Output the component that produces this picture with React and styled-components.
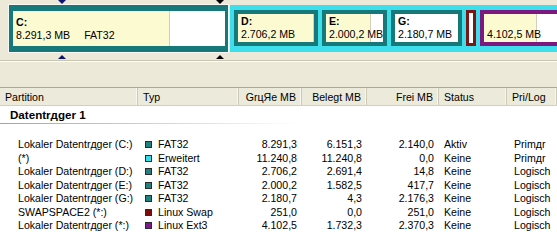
import React from 'react'
import styled, { createGlobalStyle } from 'styled-components'

const GlobalStyle = createGlobalStyle`
  html, body { margin: 0; padding: 0; }
  body {
    background: #ece9d8;
    font-family: "Liberation Sans", Arial, sans-serif;
    font-size: 10.6px;
    color: #000;
    overflow: hidden;
  }
`

const TEAL = '#17787a'
const CYAN = '#3ddfec'
const RED = '#7f1414'
const PURPLE = '#7e1881'
const YELLOW = '#fcfad1'

const Window = styled.div`
  width: 557px;
  height: 240px;
  overflow: hidden;
  display: flex;
  flex-direction: column;
`

const DiskMap = styled.div`
  position: relative;
  height: 61px;
  flex-shrink: 0;
  display: flex;
  align-items: flex-start;
  padding-left: 8px;
  box-sizing: border-box;
  border-bottom: 1px solid #c9c5b3;
  box-shadow: 0 1px 0 #fff;
`

const Marker = styled.div`
  position: absolute;
  left: ${p => p.$x - 4}px;
  top: ${p => (p.$up ? 55 : 0)}px;
  width: 0;
  height: 0;
  border-left: 4px solid transparent;
  border-right: 4px solid transparent;
  ${p => (p.$up ? 'border-bottom' : 'border-top')}: 4px solid ${p => p.$color};
`

const Selected = styled.div`
  margin-top: 4px;
  border: 1px solid #f8f7f1;
  flex-shrink: 0;
`

const Extended = styled.div`
  margin-top: 5px;
  margin-left: 1px;
  height: 47px;
  box-sizing: border-box;
  padding: 5px 0 6px 4px;
  background: ${CYAN};
  display: flex;
  gap: 4px;
  flex-shrink: 0;
`

const Block = styled.div`
  box-sizing: border-box;
  width: ${p => p.$w}px;
  height: ${p => p.$h || 36}px;
  border-style: solid;
  border-color: ${p => p.$color};
  border-width: ${p => p.$bw || '4px'};
  flex-shrink: 0;
`

const Fill = styled.div`
  height: 100%;
  box-sizing: border-box;
  padding-left: 3px;
  display: flex;
  flex-direction: column;
  justify-content: center;
  white-space: nowrap;
  line-height: 13px;
  background: ${p =>
    p.$used > 0
      ? `linear-gradient(90deg, ${YELLOW} calc(${p.$used}% - 1px), #d2cfba calc(${p.$used}% - 1px), #d2cfba ${p.$used}%, #fff ${p.$used}%)`
      : '#fff'};
`

const Name = styled.div`
  font-weight: bold;
  height: 13px;
`

const Fs = styled.span`
  margin-left: 14px;
`

const Spacer = styled.div`
  height: 26px;
  flex-shrink: 0;
`

const ListPane = styled.div`
  flex: 1;
  display: flex;
  flex-direction: column;
  border-top: 1px solid #aca899;
  background: #fff;
`

const cols = '138px 101px 63px 65px 72px 68px 1fr'

const HeaderRow = styled.div`
  display: grid;
  grid-template-columns: ${cols};
  height: 17px;
  background: #ebeadb;
  border-bottom: 1px solid #d3cfbf;
  line-height: 18px;
`

const HeadCell = styled.div`
  text-align: ${p => p.$align || 'left'};
  padding: ${p => (p.$align === 'right' ? '0 5px 0 0' : '0 0 0 5px')};
  border-right: 1px solid #cdc9b8;
  box-shadow: inset -1px 0 0 #f7f6ef;
  white-space: nowrap;
  overflow: hidden;
`

const Group = styled.div`
  font-weight: bold;
  font-size: 11.6px;
  line-height: 14px;
  padding: 2px 0 0 10px;
`

const GroupRule = styled.div`
  margin-top: 1px;
  width: 300px;
  height: 1px;
  background: linear-gradient(90deg, #a3a3a3, #fff);
`

const Rows = styled.div`
  padding-top: 14px;
`

const Row = styled.div`
  display: grid;
  grid-template-columns: ${cols};
  height: 13.5px;
  line-height: 13.5px;
  white-space: nowrap;
`

const Cell = styled.div`
  text-align: ${p => p.$align || 'left'};
  padding-left: ${p => p.$pl || 0}px;
  padding-right: ${p => (p.$align === 'right' ? 5 : 0)}px;
  overflow: hidden;
`

const TypeCell = styled.div`
  display: flex;
  align-items: center;
  padding-left: 7px;
  gap: 6px;
`

const Swatch = styled.span`
  width: 7px;
  height: 7px;
  box-sizing: border-box;
  background: ${p => p.$color};
  border: 1px solid #2b2b2b;
`

const rows = [
  { name: 'Lokaler Datentrдger (C:)', color: '#24807f', type: 'FAT32', size: '8.291,3', used: '6.151,3', free: '2.140,0', status: 'Aktiv', kind: 'Primдr' },
  { name: '(*)', color: '#3ad9e6', type: 'Erweitert', size: '11.240,8', used: '11.240,8', free: '0,0', status: 'Keine', kind: 'Primдr' },
  { name: 'Lokaler Datentrдger (D:)', color: '#24807f', type: 'FAT32', size: '2.706,2', used: '2.691,4', free: '14,8', status: 'Keine', kind: 'Logisch' },
  { name: 'Lokaler Datentrдger (E:)', color: '#24807f', type: 'FAT32', size: '2.000,2', used: '1.582,5', free: '417,7', status: 'Keine', kind: 'Logisch' },
  { name: 'Lokaler Datentrдger (G:)', color: '#24807f', type: 'FAT32', size: '2.180,7', used: '4,3', free: '2.176,3', status: 'Keine', kind: 'Logisch' },
  { name: 'SWAPSPACE2 (*:)', color: '#7a0c0c', type: 'Linux Swap', size: '251,0', used: '0,0', free: '251,0', status: 'Keine', kind: 'Logisch' },
  { name: 'Lokaler Datentrдger (*:)', color: '#7c1b89', type: 'Linux Ext3', size: '4.102,5', used: '1.732,3', free: '2.370,3', status: 'Keine', kind: 'Logisch' },
]

const logical = [
  { label: 'D:', info: '2.706,2 MB', w: 84, color: TEAL, used: 99.4 },
  { label: 'E:', info: '2.000,2 MB', w: 65, color: TEAL, used: 79.1 },
  { label: 'G:', info: '2.180,7 MB', w: 71, color: TEAL, used: 0 },
  { label: '', info: '', w: 10, color: RED, used: 0, bw: '3px' },
  { label: '', info: '4.102,5 MB', w: 133, color: PURPLE, used: 42.2 },
]

export default function App() {
  return (
    <Window>
      <GlobalStyle />
      <DiskMap>
        <Marker $x={62} $color="#0b1470" />
        <Marker $x={220} $color="#000" />
        <Marker $x={62} $color="#0b1470" $up />
        <Marker $x={220} $color="#000" $up />
        <Selected>
          <Block $w={219} $h={47} $color={TEAL} $bw="6px 3px 6px 4px">
            <Fill $used={74.2}>
              <Name>C:</Name>
              <div>8.291,3 MB<Fs>FAT32</Fs></div>
            </Fill>
          </Block>
        </Selected>
        <Extended>
          {logical.map((p, i) => (
            <Block key={i} $w={p.w} $color={p.color} $bw={p.bw}>
              <Fill $used={p.used}>
                {p.info && (
                  <>
                    <Name>{p.label || '\u00a0'}</Name>
                    <div>{p.info}</div>
                  </>
                )}
              </Fill>
            </Block>
          ))}
        </Extended>
      </DiskMap>
      <Spacer />
      <ListPane>
        <HeaderRow>
          <HeadCell>Partition</HeadCell>
          <HeadCell>Typ</HeadCell>
          <HeadCell $align="right">GrцЯe MB</HeadCell>
          <HeadCell $align="right">Belegt MB</HeadCell>
          <HeadCell $align="right">Frei MB</HeadCell>
          <HeadCell>Status</HeadCell>
          <HeadCell>Pri/Log</HeadCell>
        </HeaderRow>
        <Group>Datentrдger 1</Group>
        <GroupRule />
        <Rows>
          {rows.map(r => (
            <Row key={r.name}>
              <Cell $pl={18}>{r.name}</Cell>
              <TypeCell>
                <Swatch $color={r.color} />
                {r.type}
              </TypeCell>
              <Cell $align="right">{r.size}</Cell>
              <Cell $align="right">{r.used}</Cell>
              <Cell $align="right">{r.free}</Cell>
              <Cell $pl={5}>{r.status}</Cell>
              <Cell $pl={7}>{r.kind}</Cell>
            </Row>
          ))}
        </Rows>
      </ListPane>
    </Window>
  )
}
